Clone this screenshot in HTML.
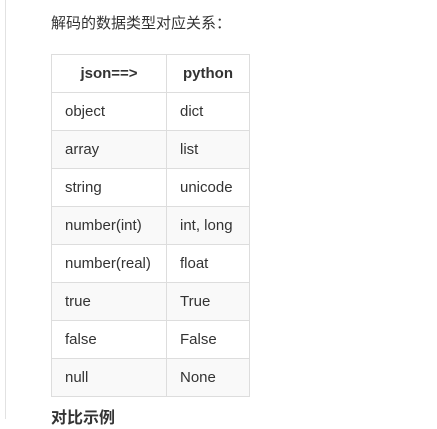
<!DOCTYPE html>
<html><head><meta charset="utf-8"></head>
<body style="margin:0;padding:0;background:#fff;width:437px;height:419px;overflow:hidden;position:relative;font-family:'Liberation Sans','Noto Sans CJK SC',sans-serif;color:#333">
<div style="position:absolute;left:5px;top:0;width:1px;height:419px;background:#e2e2e2"></div>
<div style="position:absolute;left:51px;top:13px;font-size:15px;line-height:22px;color:#333;margin:0">解码的数据类型对应关系：</div>
<table border="1" cellspacing="0" cellpadding="0" style="position:absolute;left:51px;top:54px;border-collapse:collapse;border:1px solid #ddd;font-size:15px;color:#333;margin:0">
<tr style="height:38px"><th width="114" height="37" style="border:1px solid #ddd;width:114px;height:37px;text-align:center;padding:0">json==&gt;</th><th width="82" style="border:1px solid #ddd;width:82px;text-align:center;padding:0">python</th></tr>
<tr style="height:38px"><td height="37" style="border:1px solid #ddd;height:37px;padding:0 0 0 13px">object</td><td style="border:1px solid #ddd;padding:0 0 0 13px">dict</td></tr>
<tr style="height:38px;background:#f9f9f9" bgcolor="#f9f9f9"><td height="37" style="border:1px solid #ddd;height:37px;padding:0 0 0 13px">array</td><td style="border:1px solid #ddd;padding:0 0 0 13px">list</td></tr>
<tr style="height:38px"><td height="37" style="border:1px solid #ddd;height:37px;padding:0 0 0 13px">string</td><td style="border:1px solid #ddd;padding:0 0 0 13px">unicode</td></tr>
<tr style="height:38px;background:#f9f9f9" bgcolor="#f9f9f9"><td height="37" style="border:1px solid #ddd;height:37px;padding:0 0 0 13px">number(int)</td><td style="border:1px solid #ddd;padding:0 0 0 13px">int, long</td></tr>
<tr style="height:38px"><td height="37" style="border:1px solid #ddd;height:37px;padding:0 0 0 13px">number(real)</td><td style="border:1px solid #ddd;padding:0 0 0 13px">float</td></tr>
<tr style="height:38px;background:#f9f9f9" bgcolor="#f9f9f9"><td height="37" style="border:1px solid #ddd;height:37px;padding:0 0 0 13px">true</td><td style="border:1px solid #ddd;padding:0 0 0 13px">True</td></tr>
<tr style="height:38px"><td height="37" style="border:1px solid #ddd;height:37px;padding:0 0 0 13px">false</td><td style="border:1px solid #ddd;padding:0 0 0 13px">False</td></tr>
<tr style="height:38px;background:#f9f9f9" bgcolor="#f9f9f9"><td height="37" style="border:1px solid #ddd;height:37px;padding:0 0 0 13px">null</td><td style="border:1px solid #ddd;padding:0 0 0 13px">None</td></tr>
</table>
<div style="position:absolute;left:51px;top:409px;font-size:16px;font-weight:bold;color:#333;line-height:20px">对比示例</div>
</body></html>
